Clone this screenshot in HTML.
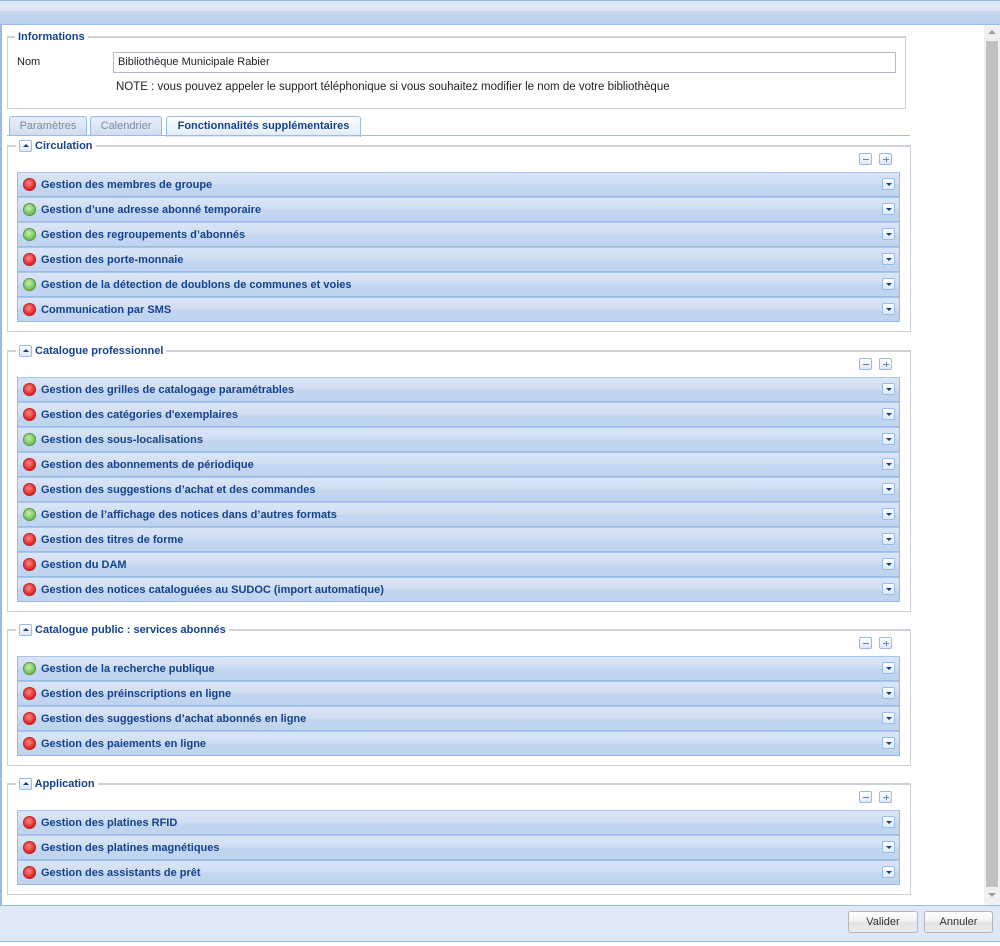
<!DOCTYPE html>
<html><head><meta charset="utf-8"><style>
*{box-sizing:border-box;margin:0;padding:0}
body{width:1000px;height:946px;background:#fff;position:relative;overflow:hidden;font-family:"Liberation Sans",sans-serif;font-size:11px}
.abs{position:absolute}
.hdr{left:0;top:0;width:1000px;height:25px;background:linear-gradient(#dfe8f6 0,#dfe8f6 40%,#c7d8f0 45%,#bcd1ef 100%);border-top:1px solid #99bbe8;border-bottom:1px solid #99bbe8}
.lb{left:0;top:25px;width:2px;height:880px;background:#99bbe8}
.sb{left:984px;top:25px;width:16px;height:880px;background:#f0f0f0}
.thumb{left:986px;top:41px;width:12px;height:846px;background:#c1c1c1}
.ftr{left:0;top:905px;width:1000px;height:37px;background:#dfe8f6;border-top:1px solid #99bbe8;border-bottom:1px solid #99bbe8}
.btn{top:911px;height:22px;border:1px solid #b5b5b5;border-radius:3px;background:linear-gradient(#fff,#f0f0f0 50%,#e2e2e2 51%,#ededed);font-size:11px;color:#333;text-align:center;line-height:20px}
fieldset.fs{position:absolute;border:1px solid #d0d0d8;border-top:2px solid #d0d0d8}
.leg{position:absolute;background:#fff;color:#15428b;font-weight:bold;font-size:11px;padding:0 3px;line-height:14px}
.tb{width:13px;height:12px;border:1px solid #99bbe8;border-radius:2px;background:linear-gradient(#fff,#dde8f7);display:inline-block;vertical-align:middle;position:relative}
.up:after{content:"";position:absolute;left:3px;top:3px;border:3px solid transparent;border-bottom:3px solid #15428b;border-top:0}
.dn:after{content:"";position:absolute;left:3px;top:4px;border:3px solid transparent;border-top:3px solid #15428b;border-bottom:0}
.mi:after{content:"";position:absolute;left:3px;top:5px;width:6px;height:1px;background:#6a85b0}
.pl:after{content:"";position:absolute;left:3px;top:5px;width:6px;height:1px;background:#6a85b0}
.pl:before{content:"";position:absolute;left:5px;top:3px;width:1px;height:5px;background:#6a85b0;margin-left:.5px}
.row{position:absolute;left:17px;width:883px;height:25px;border:1px solid #99bbe8;border-top:1px solid #a9c5ec;background:linear-gradient(#dae6f6,#d0def3 45%,#c2d6f0 55%,#c0d4ef);color:#15428b;font-weight:bold;font-size:11px;line-height:24px;padding-left:23px}
.dot{position:absolute;left:5px;top:5px;width:13px;height:13px;border-radius:50%}
.r{background:radial-gradient(circle at 45% 40%,#ff8a8a,#e02020 60%,#a80000);box-shadow:0 0 0 1px #b83030 inset}
.g{background:radial-gradient(circle at 45% 40%,#c8f0b0,#6cc050 60%,#3f9030);box-shadow:0 0 0 1px #5a9a48 inset}
.row .tb{position:absolute;right:4px;top:5px}
.tab{position:absolute;top:116px;height:20px;border:1px solid #99bbe8;border-bottom:0;border-radius:3px 3px 0 0;background:linear-gradient(#e8eef8,#cfdcef);color:#7a8aa0;text-align:center;line-height:18px;font-size:11px}
</style></head><body>
<div class="abs hdr"></div>
<div class="abs lb"></div>
<div class="abs sb"></div>
<div class="abs" style="left:988px;top:30px;border:4px solid transparent;border-bottom:4px solid #a0a0a0;border-top:0"></div>
<div class="abs thumb"></div>
<div class="abs" style="left:988px;top:893px;border:4px solid transparent;border-top:4px solid #a0a0a0;border-bottom:0"></div>

<fieldset class="fs" style="left:7px;top:36px;width:899px;height:73px"></fieldset>
<div class="leg" style="left:15px;top:30px">Informations</div>
<div class="abs" style="left:17px;top:56px;color:#222">Nom</div>
<div class="abs" style="left:113px;top:52px;width:783px;height:21px;border:1px solid #b5b8c8;padding-left:4px;line-height:19px;color:#222">Bibliothèque Municipale Rabier</div>
<div class="abs" style="left:116px;top:81px;color:#222;font-size:11.5px">NOTE : vous pouvez appeler le support téléphonique si vous souhaitez modifier le nom de votre bibliothèque</div>

<div class="tab" style="left:9px;width:78px">Paramètres</div>
<div class="tab" style="left:90px;width:72px">Calendrier</div>
<div class="tab" style="left:166px;width:195px;height:21px;background:linear-gradient(#fff,#deebf9);color:#15428b;font-weight:bold">Fonctionnalités supplémentaires</div>
<div class="abs" style="left:7px;top:135px;width:903px;height:1px;background:#99bbe8"></div>

<div id="c"></div>
<div class="abs ftr"></div>
<div class="abs btn" style="left:848px;width:70px">Valider</div>
<div class="abs btn" style="left:924px;width:69px">Annuler</div>
<script>
var S=[[145,"Circulation",[["r","Gestion des membres de groupe"],["g","Gestion d’une adresse abonné temporaire"],["g","Gestion des regroupements d’abonnés"],["r","Gestion des porte-monnaie"],["g","Gestion de la détection de doublons de communes et voies"],["r","Communication par SMS"]]],
[350,"Catalogue professionnel",[["r","Gestion des grilles de catalogage paramétrables"],["r","Gestion des catégories d'exemplaires"],["g","Gestion des sous-localisations"],["r","Gestion des abonnements de périodique"],["r","Gestion des suggestions d’achat et des commandes"],["g","Gestion de l’affichage des notices dans d’autres formats"],["r","Gestion des titres de forme"],["r","Gestion du DAM"],["r","Gestion des notices cataloguées au SUDOC (import automatique)"]]],
[629,"Catalogue public : services abonnés",[["g","Gestion de la recherche publique"],["r","Gestion des préinscriptions en ligne"],["r","Gestion des suggestions d’achat abonnés en ligne"],["r","Gestion des paiements en ligne"]]],
[783,"Application",[["r","Gestion des platines RFID"],["r","Gestion des platines magnétiques"],["r","Gestion des assistants de prêt"]]]];
var h="";
S.forEach(function(s){var L=s[0],n=s[2].length,end=L+27+n*25;
h+='<fieldset class="fs" style="left:7px;top:'+L+'px;width:904px;height:'+(end+10-L)+'px"></fieldset>';
h+='<div class="leg" style="left:16px;top:'+(L-6)+'px"><span class="tb up"></span> '+s[1]+'</div>';
h+='<span class="tb mi" style="position:absolute;left:859px;top:'+(L+8)+'px"></span><span class="tb pl" style="position:absolute;left:879px;top:'+(L+8)+'px"></span>';
s[2].forEach(function(r,i){h+='<div class="row" style="top:'+(L+27+i*25)+'px"><span class="dot '+r[0]+'"></span>'+r[1]+'<span class="tb dn"></span></div>';});
});
document.getElementById("c").innerHTML=h;
</script>
</body></html>
